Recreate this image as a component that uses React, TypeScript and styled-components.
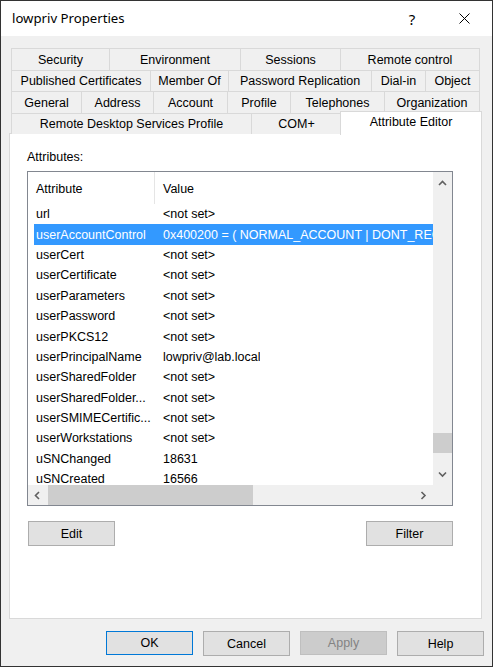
import styled, { createGlobalStyle } from "styled-components";

// styled-components styles for the properties dialog

const GlobalStyle = createGlobalStyle`
  html, body {
    margin: 0;
    padding: 0;
    background: #ffffff;
  }

  * {
    box-sizing: border-box;
  }
`;

const Window = styled.div`
  width: 493px;
  height: 667px;
  border: 1px solid #333333;
  background-color: #f0f0f0;
  display: flex;
  flex-direction: column;
  overflow: hidden;
  font-family: "Liberation Sans", Arial, sans-serif;
  font-size: 12.5px;
  color: #000000;
`;

const TitleBar = styled.div`
  height: 35px;
  flex-shrink: 0;
  background-color: #ffffff;
  display: flex;
  align-items: center;
  padding-left: 11px;
  padding-right: 2px;
`;

const Title = styled.div`
  flex: 1;
  font-family: "Noto Sans", "Open Sans", sans-serif;
  font-size: 13.2px;
  padding-bottom: 1px;
`;

const CaptionButton = styled.div`
  width: 52px;
  height: 100%;
  display: flex;
  align-items: center;
  justify-content: center;
  font-family: "Noto Sans", sans-serif;
  font-size: 15px;
`;

const Body = styled.div`
  flex: 1;
  display: flex;
  flex-direction: column;
  padding: 12px 10px 0 8px;
`;

const TabStrip = styled.div`
  display: flex;
  flex-direction: column;
  padding: 0 2px;
  margin-bottom: -1px;
  position: relative;
  z-index: 1;
`;

const TabRow = styled.div`
  display: flex;
  height: 21.5px;
`;

const Tab = styled.div<{ $w: number; $selected?: boolean }>`
  width: ${(p) => (p.$selected ? p.$w + 4 : p.$w)}px;
  flex-shrink: 0;
  display: flex;
  align-items: center;
  justify-content: center;
  white-space: nowrap;
  border-top: 1px solid #d9d9d9;
  border-right: 1px solid #d9d9d9;
  background-color: ${(p) => (p.$selected ? "#ffffff" : "#f0f0f0")};
  padding-top: ${(p) => (p.$selected ? 0 : 1)}px;
  padding-bottom: ${(p) => (p.$selected ? 2 : 0)}px;

  &:first-child {
    border-left: 1px solid #d9d9d9;
  }

  ${(p) =>
    p.$selected &&
    `
    margin: -2px -2px 0 -2px;
    height: calc(100% + 3px);
    border-left: 1px solid #d9d9d9;
  `}
`;

const Panel = styled.div`
  height: 486px;
  flex-shrink: 0;
  border: 1px solid #d9d9d9;
  background-color: #ffffff;
  padding: 16px 0 0 17px;
`;

const Label = styled.div`
  line-height: 14px;
  margin-bottom: 7px;
`;

const ListBox = styled.div`
  width: 426px;
  height: 335px;
  border: 1px solid #828790;
  display: grid;
  grid-template-columns: 1fr 19px;
  grid-template-rows: 1fr 20px;
  background-color: #ffffff;
`;

const ListContent = styled.div`
  overflow: hidden;
  display: flex;
  flex-direction: column;
`;

const HeaderRow = styled.div`
  height: 32px;
  flex-shrink: 0;
  display: flex;
  align-items: center;
`;

const HeaderCell = styled.div<{ $w?: number }>`
  width: ${(p) => (p.$w ? `${p.$w}px` : "auto")};
  height: 100%;
  display: flex;
  align-items: center;
  padding-left: 8px;
  padding-top: 2px;
  border-right: ${(p) => (p.$w ? "1px solid #e5e5e5" : "none")};
`;

const Row = styled.div<{ $selected?: boolean }>`
  height: 20.4px;
  flex-shrink: 0;
  display: flex;
  align-items: center;
  margin-left: 6px;
  white-space: nowrap;
  background-color: ${(p) => (p.$selected ? "#3399ff" : "transparent")};
  color: ${(p) => (p.$selected ? "#ffffff" : "#000000")};
`;

const NameCell = styled.div`
  width: 121px;
  flex-shrink: 0;
  padding-left: 2px;
  overflow: hidden;
`;

const ValueCell = styled.div`
  padding-left: 8px;
  overflow: hidden;
`;

const VScroll = styled.div`
  background-color: #f0f0f0;
  display: flex;
  flex-direction: column;
`;

const HScroll = styled.div`
  background-color: #f0f0f0;
  display: flex;
`;

const Corner = styled.div`
  background-color: #f0f0f0;
`;

const ArrowBox = styled.div<{ $horizontal?: boolean }>`
  width: ${(p) => (p.$horizontal ? "19px" : "100%")};
  height: ${(p) => (p.$horizontal ? "100%" : "22px")};
  flex-shrink: 0;
  display: flex;
  align-items: center;
  justify-content: center;
`;

const Track = styled.div<{ $horizontal?: boolean }>`
  flex: 1;
  display: flex;
  flex-direction: ${(p) => (p.$horizontal ? "row" : "column")};
`;

const Thumb = styled.div<{ $horizontal?: boolean }>`
  background-color: #cdcdcd;
  ${(p) =>
    p.$horizontal
      ? `height: 100%; margin-left: 1px; width: 205px;`
      : `width: 100%; height: 20px;`}
`;

const ActionRow = styled.div`
  width: 426px;
  display: flex;
  justify-content: space-between;
  margin-top: 15px;
  padding-left: 1px;
`;

const Button = styled.button<{ $variant?: "default" | "disabled" }>`
  width: 87px;
  height: ${(p) => (p.$variant ? 24 : 25)}px;
  padding: 0;
  font-family: "Liberation Sans", Arial, sans-serif;
  font-size: 12.5px;
  background-color: ${(p) => (p.$variant === "disabled" ? "#cccccc" : "#e1e1e1")};
  color: ${(p) => (p.$variant === "disabled" ? "#838383" : "#000000")};
  border: 1px solid
    ${(p) =>
      p.$variant === "default"
        ? "#0078d7"
        : p.$variant === "disabled"
        ? "#bfbfbf"
        : "#adadad"};
`;

const Footer = styled.div`
  display: flex;
  justify-content: flex-end;
  gap: 10px;
  margin-top: 12px;
  margin-right: -2px;
`;

type Dir = "up" | "down" | "left" | "right";

const chevrons: Record<Dir, string> = {
  up: "M1 5 L4.5 1.5 L8 5",
  down: "M1 1.5 L4.5 5 L8 1.5",
  left: "M5 1 L1.5 4.5 L5 8",
  right: "M1.5 1 L5 4.5 L1.5 8",
};

function Chevron({ dir }: { dir: Dir }) {
  const horizontal = dir === "left" || dir === "right";
  return (
    <svg
      width={horizontal ? 7 : 9}
      height={horizontal ? 9 : 7}
      viewBox={horizontal ? "0 0 7 9" : "0 0 9 7"}
    >
      <path d={chevrons[dir]} fill="none" stroke="#606060" strokeWidth="1.6" />
    </svg>
  );
}

const tabRows: { label: string; w: number; selected?: boolean }[][] = [
  [
    { label: "Security", w: 99 },
    { label: "Environment", w: 131 },
    { label: "Sessions", w: 100 },
    { label: "Remote control", w: 139 },
  ],
  [
    { label: "Published Certificates", w: 140 },
    { label: "Member Of", w: 78 },
    { label: "Password Replication", w: 143 },
    { label: "Dial-in", w: 54 },
    { label: "Object", w: 54 },
  ],
  [
    { label: "General", w: 71 },
    { label: "Address", w: 72 },
    { label: "Account", w: 74 },
    { label: "Profile", w: 63 },
    { label: "Telephones", w: 94 },
    { label: "Organization", w: 95 },
  ],
  [
    { label: "Remote Desktop Services Profile", w: 241 },
    { label: "COM+", w: 90 },
    { label: "Attribute Editor", w: 138, selected: true },
  ],
];

const attributes: [string, string][] = [
  ["url", "<not set>"],
  ["userAccountControl", "0x400200 = ( NORMAL_ACCOUNT | DONT_REQ_PREAUTH )"],
  ["userCert", "<not set>"],
  ["userCertificate", "<not set>"],
  ["userParameters", "<not set>"],
  ["userPassword", "<not set>"],
  ["userPKCS12", "<not set>"],
  ["userPrincipalName", "lowpriv@lab.local"],
  ["userSharedFolder", "<not set>"],
  ["userSharedFolder...", "<not set>"],
  ["userSMIMECertific...", "<not set>"],
  ["userWorkstations", "<not set>"],
  ["uSNChanged", "18631"],
  ["uSNCreated", "16566"],
];

export default function App() {
  const selectedIndex = 1;
  const thumbOffset = 239;

  return (
    <>
      <GlobalStyle />
      <Window>
        <TitleBar>
          <Title>lowpriv Properties</Title>
          <CaptionButton>?</CaptionButton>
          <CaptionButton>
            <svg width="11" height="11" viewBox="0 0 11 11">
              <path d="M0.5 0.5 L10.5 10.5 M10.5 0.5 L0.5 10.5" stroke="#000" strokeWidth="1" />
            </svg>
          </CaptionButton>
        </TitleBar>
        <Body>
          <TabStrip>
            {tabRows.map((row, i) => (
              <TabRow key={i}>
                {row.map((tab) => (
                  <Tab key={tab.label} $w={tab.w} $selected={tab.selected}>
                    {tab.label}
                  </Tab>
                ))}
              </TabRow>
            ))}
          </TabStrip>
          <Panel>
            <Label>Attributes:</Label>
            <ListBox>
              <ListContent>
                <HeaderRow>
                  <HeaderCell $w={127}>Attribute</HeaderCell>
                  <HeaderCell>Value</HeaderCell>
                </HeaderRow>
                {attributes.map(([name, value], index) => (
                  <Row key={name} $selected={index === selectedIndex}>
                    <NameCell>{name}</NameCell>
                    <ValueCell>{value}</ValueCell>
                  </Row>
                ))}
              </ListContent>
              <VScroll>
                <ArrowBox>
                  <Chevron dir="up" />
                </ArrowBox>
                <Track>
                  <Thumb style={{ marginTop: thumbOffset }} />
                </Track>
                <ArrowBox>
                  <Chevron dir="down" />
                </ArrowBox>
              </VScroll>
              <HScroll>
                <ArrowBox $horizontal>
                  <Chevron dir="left" />
                </ArrowBox>
                <Track $horizontal>
                  <Thumb $horizontal />
                </Track>
                <ArrowBox $horizontal>
                  <Chevron dir="right" />
                </ArrowBox>
              </HScroll>
              <Corner />
            </ListBox>
            <ActionRow>
              <Button>Edit</Button>
              <Button>Filter</Button>
            </ActionRow>
          </Panel>
          <Footer>
            <Button $variant="default">OK</Button>
            <Button>Cancel</Button>
            <Button $variant="disabled">Apply</Button>
            <Button>Help</Button>
          </Footer>
        </Body>
      </Window>
    </>
  );
}
